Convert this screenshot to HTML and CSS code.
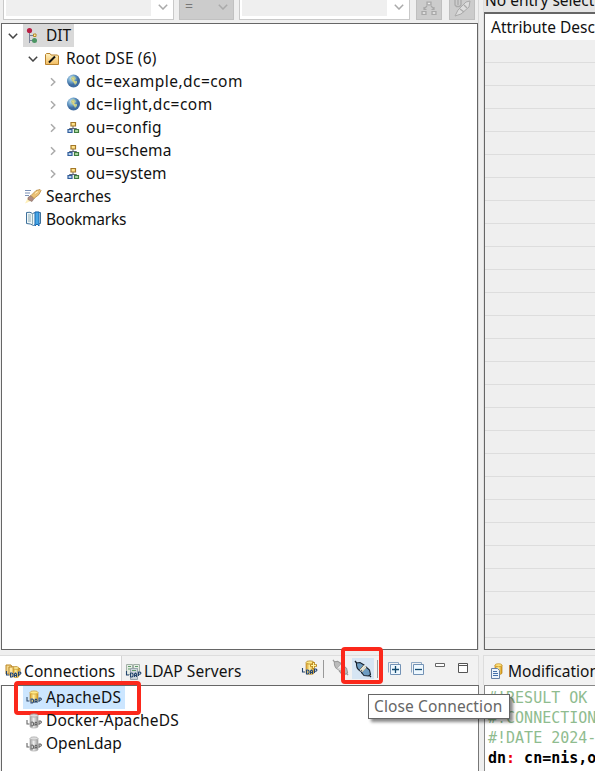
FILE: index.html
```html
<!DOCTYPE html>
<html lang="en">
<head>
<meta charset="utf-8">
<title>LDAP Browser</title>
<link rel="stylesheet" href="styles.css">
</head>
<body>
<svg class="defs" width="0" height="0">
  <defs>
    <linearGradient id="gold" x2="1"><stop stop-color="#d79b24"/><stop offset=".45" stop-color="#ffef9f"/><stop offset="1" stop-color="#d6960f"/></linearGradient>
    <linearGradient id="gray" x2="1"><stop stop-color="#999"/><stop offset=".45" stop-color="#eee"/><stop offset="1" stop-color="#999"/></linearGradient>
    <linearGradient id="folder" x2="0" y2="1"><stop stop-color="#fff2c0"/><stop offset="1" stop-color="#f2bd62"/></linearGradient>
    <radialGradient id="sea" cx=".35" cy=".3"><stop stop-color="#c9e4f2"/><stop offset=".6" stop-color="#6b9fc8"/><stop offset="1" stop-color="#3f6ca0"/></radialGradient>
    <symbol id="ldap-word" viewBox="0 0 16 7"><path d="M1 0v4h2.500M5 2v4h1.500l1-1V3l-1-1zM9 6V3l1-1 1 1v3M9 4.500h2M13 5V1h1.500l.8.8v.8l-.8.7H13" fill="none" stroke="currentColor" stroke-width="1.100"/></symbol>
    <symbol id="down" viewBox="0 0 10 6"><path d="M.8.8 5 5 9.200.8" fill="none" stroke="currentColor" stroke-width="1.500"/></symbol>
    <symbol id="right" viewBox="0 0 6 10"><path d="M1 1.200 4.800 5 1 8.800" fill="none" stroke="currentColor" stroke-width="1.500"/></symbol>
    <symbol id="globe" viewBox="0 0 16 16"><circle cx="8.500" cy="7" r="6.500" fill="url(#sea)"/><path d="M6 4 8 2l2 1 1 2-2 1 1 1 2 0 0 2-2 2-1-2-2-2-1-2z" fill="#b7cb91"/><path d="m7 4 2 1-1 2M9 7l1 2" stroke="#eed680" fill="none"/></symbol>
    <symbol id="unit" viewBox="0 0 16 16"><path d="M8 6v3M4.500 10V8.500h7V10" fill="none" stroke="#5b6575"/><path d="M6 2.500h4.500v3.500H6z" fill="#ffe38a" stroke="#a37728" stroke-width="1.200"/><path d="M3 9.500h4v3H3z" fill="#b7d2ed" stroke="#315d9b" stroke-width="1.200"/><path d="M9.500 9.500h4v3h-4z" fill="#add7a2" stroke="#3e7b40" stroke-width="1.200"/></symbol>
    <symbol id="db-gold" viewBox="0 0 16 16"><path d="M4 2.500v8c0 2 8 2 8 0v-8" fill="url(#gold)" stroke="#c3933c" stroke-width=".7"/><ellipse cx="8" cy="2.500" rx="4" ry="1.600" fill="#ffe987" stroke="#d3a63c" stroke-width=".8"/></symbol>
    <symbol id="db-gray" viewBox="0 0 16 16"><path d="M4 2.500v11c0 2 8 2 8 0v-11" fill="url(#gray)" stroke="#aaa" stroke-width=".7"/><ellipse cx="8" cy="2.500" rx="4" ry="1.600" fill="#ddd" stroke="#aaa" stroke-width=".8"/></symbol>
    <symbol id="plug" viewBox="0 0 18 18"><path d="m1 1 2 2.500M14.500 14.500 17 17M7.500 9.500l-1.500 2M9.500 11l-2 2" fill="none" stroke="currentColor" stroke-width="1.300"/><path d="M2.500 3 6 2.500l4 2.500-4.500 5.500Q2 8 2.500 3z" fill="var(--body)" stroke="currentColor" stroke-width="1.100"/><path d="m12 7 3.500 3 1 4.500-2 1.500-4.500-.5-2.500-3z" fill="var(--body)" stroke="currentColor" stroke-width="1.100"/><path d="m6 10.500 4.500-5M8 11.700 12 7" stroke="var(--rim)" stroke-width="1.200"/></symbol>
  </defs>
</svg>
<div class="workbench">
  <section class="browser">
    <div class="filter">
      <div class="combo attr"><span></span><svg width="10" height="6"><use href="#down"/></svg></div>
      <div class="combo op"><span>=</span><svg width="10" height="6"><use href="#down"/></svg></div>
      <div class="combo value"><span></span><svg width="10" height="6"><use href="#down"/></svg></div>
      <div class="tool one"><svg width="16" height="16" viewBox="0 0 16 16"><path d="M6 2h4v3H6zM1 11.500h4v3H1zM11 11.500h4v3h-4zM6 6 3 9M3 7v2.500h2.500M10 6l3 3M13 7v2.500h-2.500" fill="none" stroke="#a8a8a8" stroke-width="1.200"/><path d="M2 12.500h2v1H2zM12 12.500h2v1h-2zM7 3h2v1H7z" fill="#eee"/></svg></div>
      <div class="tool two"><svg width="18" height="18" viewBox="0 0 18 18"><path d="m2 16 3-6 8-8 4-1-1 6-8 7z" fill="#ddd" stroke="#aaa"/><path d="M2 0v5l1.500 1.500h3L8 5V0M5 0v5M7 9l4 3M11 5l3 3" fill="none" stroke="#aaa" stroke-width="1.300"/></svg></div>
    </div>
    <div class="tree">
      <div class="row"><svg class="arrow open" width="10" height="6"><use href="#down"/></svg><div class="selected root-node"><svg width="16" height="16" viewBox="0 0 16 16"><path d="M4.500 4v11M4.500 7.500h4M4.500 12.500h4" fill="none" stroke="#768096"/><circle cx="4.500" cy="2.500" r="2.600" fill="#b91f43"/><path d="M8.500 6h2.500v2.500H8.500z" fill="#fff1a8" stroke="#b58a2c"/><circle cx="9.500" cy="12.500" r="2.500" fill="#4c9563"/></svg><b class="t dit">DIT</b></div></div>
      <div class="row l1"><svg class="arrow open" width="10" height="6"><use href="#down"/></svg><svg width="16" height="16" viewBox="0 0 16 16"><path d="M1.500 13.500v-10l1-1H6l1 1.500h6.500l1 1v8.500z" fill="url(#folder)" stroke="#b8822e"/><path d="m5 11.500 6-6" stroke="#111" stroke-width="2"/></svg><b class="t wide">Root DSE (6)</b></div>
      <div class="row l2"><svg class="arrow" width="6" height="10"><use href="#right"/></svg><svg width="16" height="16"><use href="#globe"/></svg><b class="t dc">dc=example,dc=com</b></div>
      <div class="row l2"><svg class="arrow" width="6" height="10"><use href="#right"/></svg><svg width="16" height="16"><use href="#globe"/></svg><b class="t dc">dc=light,dc=com</b></div>
      <div class="row l2"><svg class="arrow" width="6" height="10"><use href="#right"/></svg><svg width="16" height="16"><use href="#unit"/></svg><b class="t ou">ou=config</b></div>
      <div class="row l2"><svg class="arrow" width="6" height="10"><use href="#right"/></svg><svg width="16" height="16"><use href="#unit"/></svg><b class="t wide">ou=schema</b></div>
      <div class="row l2"><svg class="arrow" width="6" height="10"><use href="#right"/></svg><svg width="16" height="16"><use href="#unit"/></svg><b class="t wide">ou=system</b></div>
      <div class="row leaf"><svg width="18" height="16" viewBox="0 0 18 16"><path d="M1 1.500h6M1 4h5M1 6.500h4" stroke="#7c91b6"/><path d="m1 14.500 3-6 4 3z" fill="#fff0b9"/><path d="m4 8.500 3-2 3 3-2 3-4-2z" fill="#b18c82" stroke="#80645d" stroke-width=".6"/><path d="m7 6.500 5-5 4-1 1 1-2 4-5 4z" fill="#ecc176" stroke="#b1843b" stroke-width=".7"/><path d="m11 4.500 3-2" stroke="#fff1bf"/></svg><b class="t">Searches</b></div>
      <div class="row leaf"><svg class="book" width="18" height="16" viewBox="0 0 18 16"><path d="M1.500 1.500q4-1 6 1 3-2 8-1v11q-5 0-7 2-3-2-7-2z" fill="#eef6f8" stroke="#3f719b"/><path d="M7.500 2.500v11M3 4h3M3 6h3M3 8h3M3 10h3" stroke="#92aeb5"/><path d="M10 1h4v14l-2-2-2 2z" fill="#46a6e5" stroke="#1767af"/></svg><b class="t narrow">Bookmarks</b></div>
    </div>
  </section>
  <section class="editor">
    <div class="entry"><b class="t">No entry selected</b></div>
    <div class="table"><div class="head"><b class="t">Attribute Description</b></div><div class="stripes"></div></div>
  </section>
  <section class="connections">
    <div class="tabs">
      <div class="tab active"><svg width="18" height="18" viewBox="0 0 18 18"><path d="M1 2h5l1 2h5v7H1z" fill="#f2d68c" stroke="#ba8624"/><path d="M4 4h5l1 1.500h5V12H4z" fill="#ffe9a4" stroke="#ba8624"/><path d="M8 5v8c0 2 6 2 6 0V5" fill="url(#gold)" stroke="#bd8a20" stroke-width=".7"/><ellipse cx="11" cy="5" rx="3" ry="1.300" fill="#fff0a0" stroke="#bd8a20" stroke-width=".7"/><use href="#ldap-word" y="8" width="17" height="7" class="halo"/><use href="#ldap-word" y="8" width="17" height="7"/></svg><b class="t conns">Connections</b></div>
      <div class="tab inactive"><svg width="18" height="18" viewBox="0 0 18 18"><path d="M1.500 1.500h6v10h-6zM8.500 1.500h6v8h-6z" fill="#e5ece5" stroke="#a3b0a7"/><path d="M3 3.500h3M10 3.500h3M10 6h3M3 6h3" stroke="#5f9b67"/><path d="M5.500 5.500h7v11h-7z" fill="#ccd5da" stroke="#9aa5ae"/><path d="M7 7.500h4" stroke="#5f9b67"/><use href="#ldap-word" y="8" width="17" height="7" class="halo"/><use href="#ldap-word" y="8" width="17" height="7"/></svg><b class="t servers">LDAP Servers</b></div>
      <div class="actions">
        <svg class="new" width="17" height="17" viewBox="0 0 17 17"><path d="M5 3v10c0 2 8 2 8 0V3" fill="url(#gold)" stroke="#c3933c" stroke-width=".7"/><ellipse cx="9" cy="2.500" rx="4" ry="1.600" fill="#ffe987" stroke="#b58821" stroke-width=".8"/><path d="M12.500 2v7M9 5.500h7" stroke="#bd8a20" stroke-width="2.600"/><path d="M12.500 3v5M10 5.500h5" stroke="#fff4a0"/><use href="#ldap-word" y="8" width="17" height="7" class="halo"/><use href="#ldap-word" y="8" width="17" height="7"/></svg>
        <i class="sep"></i>
        <svg class="plug off" width="17" height="17"><use href="#plug"/></svg>
        <div class="plug-button"><svg class="plug" width="18" height="18"><use href="#plug"/></svg><div class="mark"></div></div>
        <i class="sep second"></i>
        <svg class="expand" width="14" height="14" viewBox="0 0 14 14"><path d="M.5 10.500V.5h10v2" fill="none" stroke="#8fa9c5"/><path d="M2.500 2.500h10v10h-10z" fill="#eef8ff" stroke="#7392b5"/><path d="M7.500 4v7M4 7.500h7" stroke="#12496e" stroke-width="1.300"/></svg>
        <svg class="collapse" width="14" height="14" viewBox="0 0 14 14"><path d="M.5 10.500V.5h10v2" fill="none" stroke="#8fa9c5"/><path d="M2.500 2.500h10v10h-10z" fill="#eef8ff" stroke="#7392b5"/><path d="M4 7.500h7" stroke="#12496e" stroke-width="1.300"/></svg>
        <svg class="min" width="11" height="11" viewBox="0 0 11 11"><path d="M.5.5h9v3h-9z" fill="#fff" stroke="#666"/></svg>
        <svg class="max" width="11" height="11" viewBox="0 0 11 11"><path d="M.5.5h9v9h-9zM0 2.500h10" fill="#fff" stroke="#555"/></svg>
      </div>
    </div>
    <div class="list">
      <div class="conn"><div class="selected"><svg width="16" height="16"><use href="#db-gold"/><use href="#ldap-word" y="7" width="16" height="7" class="halo"/><use href="#ldap-word" y="7" width="16" height="7"/></svg><b class="t cn">ApacheDS</b></div><div class="mark"></div></div>
      <div class="conn gray"><svg width="16" height="16"><use href="#db-gray"/><use href="#ldap-word" y="7" width="16" height="7" class="halo"/><use href="#ldap-word" y="7" width="16" height="7"/></svg><b class="t cn">Docker-ApacheDS</b></div>
      <div class="conn gray"><svg width="16" height="16"><use href="#db-gray"/><use href="#ldap-word" y="7" width="16" height="7" class="halo"/><use href="#ldap-word" y="7" width="16" height="7"/></svg><b class="t">OpenLdap</b></div>
    </div>
    <div class="tooltip">Close Connection</div>
  </section>
  <section class="logs">
    <div class="log-tab"><svg width="13" height="17" viewBox="0 0 13 17"><path d="M4 2v8c0 2 7 2 7 0V2" fill="url(#gold)" stroke="#b98118" stroke-width=".7"/><ellipse cx="7.500" cy="2.200" rx="3.500" ry="1.500" fill="#ffe27a" stroke="#c18b20" stroke-width=".7"/><path d="M.5 5.500h6l2 2v8h-8z" fill="#edf4fc" stroke="#6680a5"/><path d="M2 8.500h4M2 10.500h5M2 12.500h5" stroke="#4671aa"/></svg><b class="t">Modification Logs</b></div>
    <pre class="log"><span>#!RESULT OK</span>
<span>#!CONNECTION ldap</span>
<span>#!DATE 2024-</span>
<strong>dn<em>:</em> cn=nis,ou=schema</strong></pre>
  </section>
</div>
</body>
</html>
```

FILE: styles.css
```css
* { box-sizing: border-box; }
html { overflow: hidden; }
body { margin: 0; width: 595px; height: 771px; overflow: hidden; background: #efefef; color: #111; font: 15.5px/23px "Noto Sans", sans-serif; }
svg { display: block; flex: none; overflow: visible; }
.defs { position: absolute; }
.t { font-weight: 400; white-space: nowrap; }
.wide { letter-spacing: .15px; }
.narrow { letter-spacing: -.25px; }
.dc { letter-spacing: .45px; }
.ou { letter-spacing: .3px; }
.cn { letter-spacing: .18px; }
.conns, .servers { letter-spacing: .08px; }
.workbench { display: grid; grid-template-columns: 479px 112px; column-gap: 4px; grid-template-rows: 650px 121px; height: 771px; }
.workbench > section { min-width: 0; min-height: 0; }

.browser { display: flex; flex-direction: column; padding-left: 1px; border-right: 1px solid #d9d9d9; }
.filter { display: flex; flex: none; height: 23px; padding: 0 2px 3px; }
.combo { display: flex; align-items: center; justify-content: space-between; flex: none; border: 1px solid #c9c9c9; border-top: 0; background: #fff; padding: 0 5px 5px 2px; color: #aaa; }
.combo span { height: 17px; background: #efefef; }
.attr { width: 171px; }
.attr span { width: 145px; }
.op { width: 55px; margin-left: 5px; background: #ccc; border-color: #c1c1c1; }
.op span { background: none; font-size: 14px; line-height: 14px; padding-left: 3px; color: #777; }
.value { width: 171px; margin-left: 5px; }
.value span { width: 145px; }
.tool { width: 26px; flex: none; border: 1px solid #bfbfbf; border-top: 0; background: #ccc; display: grid; place-items: end center; padding-bottom: 5px; }
.one { margin-left: 6px; }
.two { margin-left: 7px; }
.tree { flex: 1; border: 1px solid #666; background: #fff; }
.row { display: flex; align-items: center; height: 23px; padding-left: 6px; }
.row .arrow { color: #aaa; }
.row .open { color: #444; }
.l1 { padding-left: 26px; }
.l2 { padding-left: 48px; }
.l1 .t { margin-left: 6px; }
.l2 .t { margin-left: 5px; }
.l1 .open + svg { margin-left: 6px; }
.l2 .arrow + svg { margin-left: 9px; }
.leaf { padding-left: 22px; }
.leaf .t { margin-left: 4px; }
.book { margin: 0 -1px 2px 1px; }
.selected { display: flex; align-items: center; height: 23px; }
.root-node { background: #d9d9d9; width: 51px; margin-left: 5px; padding-left: 2px; }
.dit { margin-left: 5px; }

.editor { display: flex; flex-direction: column; border-left: 1px solid #e0e0e0; }
.entry { height: 12px; display: flex; align-items: end; background: #e5e5e5; padding-left: 1px; overflow: hidden; flex: none; }
.table { flex: 1; border: solid #666; border-width: 2px 0 1px 1px; overflow: hidden; }
.head { height: 26px; background: #fff; padding: 2px 0 0 6px; }
.stripes { height: 609px; background: repeating-linear-gradient(#efefef 0 22px, #ddd 22px 23px); }

.connections { position: relative; display: flex; flex-direction: column; padding-top: 5px; }
.tabs { display: flex; height: 30px; border-top: 1px solid #ddd; background: #f2f2f2; border-right: 1px solid #ddd; }
.tab { display: flex; align-items: center; padding: 2px 0 0 5px; }
.tab .t { margin-left: 1px; }
.active { width: 122px; background: #fff; border-right: 1px solid #d4d4d4; }
.inactive { width: 124px; padding-left: 3px; }
.tab svg, .actions, .conn { color: #24456e; }
.halo { color: #fff; stroke-width: 3; opacity: .8; }
.actions { display: flex; align-items: start; margin-left: 55px; padding-top: 4px; }
.sep { width: 1px; height: 18px; background: #999; margin-left: 5px; }
.plug { --body: #6d9cc1; --rim: #f7edcb; color: #17212d; }
.off { --body: #bbb; --rim: #eee; color: #999; margin: -1px 0 0 8px; }
.plug-button { position: relative; width: 22px; height: 21px; background: #d6e5f3; margin: -2px 0 0 3px; padding: 2px; }
.mark { position: absolute; border: 4px solid #fb281b; border-radius: 4px; }
.plug-button .mark { left: -11px; top: -11px; width: 42px; height: 37px; }
.second { margin-left: 3px; }
.expand { margin: 2px 0 0 10px; }
.collapse { margin: 2px 0 0 9px; }
.min { margin: 3px 0 0 10px; }
.max { margin: 3px 0 0 12px; }
.list { flex: 1; border: solid #666; border-width: 1px 1px 0; margin-left: 1px; background: #fff; border-right-color: #777; }
.conn { position: relative; display: flex; align-items: center; height: 23px; padding-left: 24px; }
.conn .t { color: #111; margin-left: 4px; }
.conn .selected { background: #cce6ff; width: 102px; margin-left: -3px; padding-left: 3px; }
.conn .mark { left: 12px; top: -5px; width: 127px; height: 34px; }
.conn.gray { color: #666; }
.tooltip { position: absolute; left: 368px; top: 44px; width: 142px; height: 25px; border: 1px solid #666; background: #fff; color: #666; padding-left: 5px; letter-spacing: .12px; white-space: nowrap; box-shadow: 3px 3px 3px #0007; z-index: 3; }

.logs { display: flex; flex-direction: column; padding-top: 5px; }
.log-tab { display: flex; align-items: center; height: 30px; flex: none; border: solid #ddd; border-width: 1px 0 0 1px; background: #f2f2f2; padding: 1px 0 0 7px; overflow: hidden; }
.log-tab .t { margin-left: 4px; }
.log { flex: 1; margin: 0 0 0 1px; overflow: hidden; border: solid #888; border-width: 1px 0 0 1px; background: #fff; padding: 2px 0 0 3px; font: 15px/20px "DejaVu Sans Mono", monospace; color: #8fbc8f; }
.log strong { color: #000; }
.log em { font-style: normal; color: #e00; }
```
